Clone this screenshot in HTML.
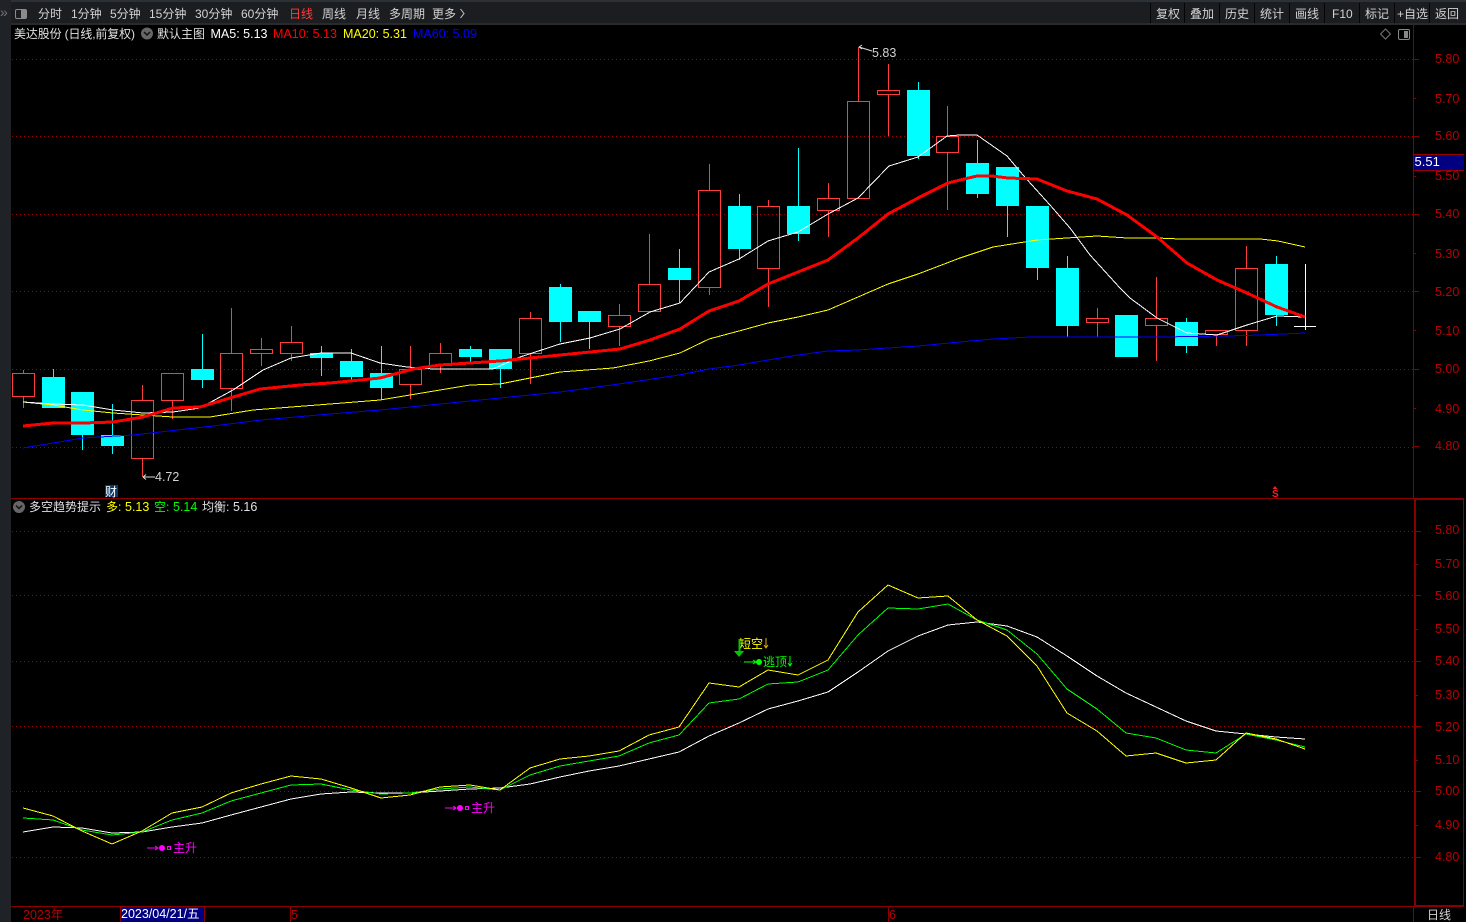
<!DOCTYPE html>
<html><head><meta charset="utf-8"><style>
html,body{margin:0;padding:0;background:#000;width:1466px;height:922px;overflow:hidden}
svg{display:block;position:absolute;left:0;top:0}
text{font-family:"Liberation Sans","Noto Sans CJK SC",sans-serif;font-size:12.5px}
.t{fill:#d2d2d2;font-size:12px}
.a{fill:#bb0000;font-size:12.5px}
</style></head><body>
<svg width="1466" height="922" viewBox="0 0 1466 922" xmlns="http://www.w3.org/2000/svg">
<rect width="1466" height="922" fill="#000"/>
<!-- left strip / toolbar -->
<rect x="0" y="0" width="11" height="922" fill="#1f2327"/>
<rect x="0" y="0" width="1466" height="24" fill="#1b1d21"/>
<rect x="0" y="0" width="1466" height="2" fill="#2c3137"/>
<rect x="11" y="23" width="1455" height="2" fill="#2a2a2a"/>
<rect x="0" y="0" width="11" height="25" fill="#1f2327"/>
<text x="0" y="17" style="font-size:14px;fill:#70757a">»</text>
<rect x="15.5" y="9.5" width="11" height="9" rx="1.5" fill="none" stroke="#8a8a8a"/>
<rect x="21" y="10" width="5" height="8" fill="#8a8a8a"/>
<g class="tb">
<text class="t" x="38" y="18">分时</text>
<text class="t" x="71" y="18">1分钟</text>
<text class="t" x="110" y="18">5分钟</text>
<text class="t" x="149" y="18">15分钟</text>
<text class="t" x="195" y="18">30分钟</text>
<text class="t" x="241" y="18">60分钟</text>
<text class="t" x="289" y="18" style="fill:#ff3c3c">日线</text>
<text class="t" x="322" y="18">周线</text>
<text class="t" x="356" y="18">月线</text>
<text class="t" x="389" y="18">多周期</text>
<text class="t" x="432" y="18">更多</text>
<path d="M460.500 9l3.500 4.500l-3.500 4.500" fill="none" stroke="#c8c8c8"/>
</g>
<!-- right toolbar buttons -->
<path d="M1150.500 3V23M1184.500 3V23M1219.500 3V23M1254.500 3V23M1289.500 3V23M1324.500 3V23M1359.500 3V23M1394.500 3V23M1429.500 3V23" stroke="#050505" shape-rendering="crispEdges"/>
<text class="t" x="1156" y="18">复权</text>
<text class="t" x="1190" y="18">叠加</text>
<text class="t" x="1225" y="18">历史</text>
<text class="t" x="1260" y="18">统计</text>
<text class="t" x="1295" y="18">画线</text>
<text class="t" x="1332" y="18">F10</text>
<text class="t" x="1365" y="18">标记</text>
<text class="t" x="1397" y="18">+自选</text>
<text class="t" x="1435" y="18">返回</text>
<!-- header legend -->
<text class="t" x="14" y="38" textLength="121" style="fill:#e0e0e0">美达股份 (日线,前复权)</text>
<circle cx="147" cy="33.500" r="6" fill="#666"/>
<path d="M144 32l3 3l3-3" fill="none" stroke="#111" stroke-width="1.500"/>
<text class="t" x="157" y="38" style="fill:#e0e0e0">默认主图</text>
<text x="210.500" y="38" style="fill:#ffffff">MA5: 5.13</text>
<text x="273" y="38" style="fill:#ff0000">MA10: 5.13</text>
<text x="343" y="38" style="fill:#ffff00">MA20: 5.31</text>
<text x="413" y="38" style="fill:#0000ff">MA60: 5.09</text>
<path d="M1385.500 29l5 5l-5 5l-5-5z" fill="none" stroke="#777"/>
<rect x="1398.500" y="29.500" width="11" height="10" rx="1.500" fill="none" stroke="#888"/>
<rect x="1404" y="31" width="4" height="7" fill="#888"/>
<!-- grid -->
<g stroke="#a00000" stroke-dasharray="1 3" shape-rendering="crispEdges">
<path d="M12 59.500H1413M12 136.500H1413M12 214.500H1413M12 291.500H1413M12 369.500H1413M12 447.500H1413"/>
<path d="M12 531.500H1413M12 595.500H1413M12 661.500H1413M12 726.500H1413M12 791.500H1413M12 857.500H1413"/>
</g>
<!-- frame -->
<g fill="#8a0000" shape-rendering="crispEdges">
<rect x="11" y="498" width="1403" height="1"/>
<rect x="1413" y="25" width="1" height="473"/>
<rect x="1414" y="498" width="50" height="2"/>
<rect x="1414" y="498" width="2" height="408"/>
<rect x="1463" y="498" width="1" height="408"/>
<rect x="1414" y="905" width="50" height="2"/>
<rect x="11" y="906" width="1403" height="1"/>
<rect x="1413" y="906" width="1" height="16"/>
<rect x="120" y="907" width="1" height="15"/>
<rect x="204" y="907" width="1" height="15"/>
<rect x="290" y="907" width="1" height="15"/>
<rect x="888" y="907" width="1" height="15"/>
</g>
<!-- axis ticks -->
<path d="M1414 59.500h5M1414 98.500h2M1414 136.500h5M1414 176.500h2M1414 214.500h5M1414 253.500h2M1414 291.500h5M1414 330.500h2M1414 369.500h5M1414 408.500h2M1414 446.500h5M1416 531.500h5M1416 564.500h2M1416 595.500h5M1416 629.500h2M1416 661.500h5M1416 695.500h2M1416 726.500h5M1416 760.500h2M1416 791.500h5M1416 825.500h2M1416 857.500h5" stroke="#8a0000" shape-rendering="crispEdges"/>
<!-- axis labels -->
<text class="a" x="1435" y="63">5.80</text><text class="a" x="1435" y="103">5.70</text><text class="a" x="1435" y="140">5.60</text><text class="a" x="1435" y="180">5.50</text><text class="a" x="1435" y="218">5.40</text><text class="a" x="1435" y="258">5.30</text><text class="a" x="1435" y="296">5.20</text><text class="a" x="1435" y="335">5.10</text><text class="a" x="1435" y="373">5.00</text><text class="a" x="1435" y="413">4.90</text><text class="a" x="1435" y="450">4.80</text>
<text class="a" x="1435" y="534">5.80</text><text class="a" x="1435" y="568">5.70</text><text class="a" x="1435" y="600">5.60</text><text class="a" x="1435" y="633">5.50</text><text class="a" x="1435" y="665">5.40</text><text class="a" x="1435" y="699">5.30</text><text class="a" x="1435" y="731">5.20</text><text class="a" x="1435" y="764">5.10</text><text class="a" x="1435" y="795">5.00</text><text class="a" x="1435" y="829">4.90</text><text class="a" x="1435" y="861">4.80</text>
<!-- current price -->
<rect x="1414" y="154" width="50" height="16" fill="#000080"/>
<path d="M1414 154.500h50M1414 170.500h50" stroke="#9a0000" shape-rendering="crispEdges"/>
<text x="1414.500" y="166" style="fill:#fff;font-size:13px">5.51</text>
<!-- cyan candles -->
<g shape-rendering="crispEdges">
<path stroke="#00ffff" fill="none" d="M53.500 369V377M82.500 435V450M112.500 404V435M112.500 446V454M202.500 334V369M202.500 380V388M321.500 346V353M321.500 358V376M351.500 349V361M351.500 377V381M381.500 346V373M381.500 388V400M470.500 346V349M470.500 357V362M500.500 369V388M560.500 284V287M560.500 322V342M589.500 322V349M679.500 249V268M679.500 280V303M739.500 194V206M739.500 249V260M798.500 148V206M798.500 234V241M918.500 82V90M918.500 156V159M977.500 140V163M977.500 194V198M1007.500 206V237M1037.500 268V280M1067.500 256V268M1067.500 326V337M1186.500 318V322M1186.500 346V353M1276.500 256V264M1276.500 315V326"/>
<g fill="#00ffff">
<rect x="42" y="377" width="23" height="31"/><rect x="71" y="392" width="23" height="43"/><rect x="101" y="435" width="23" height="11"/><rect x="191" y="369" width="23" height="11"/><rect x="310" y="353" width="23" height="5"/><rect x="340" y="361" width="23" height="16"/><rect x="370" y="373" width="23" height="15"/><rect x="459" y="349" width="23" height="8"/><rect x="489" y="349" width="23" height="20"/><rect x="549" y="287" width="23" height="35"/><rect x="578" y="311" width="23" height="11"/><rect x="668" y="268" width="23" height="12"/><rect x="728" y="206" width="23" height="43"/><rect x="787" y="206" width="23" height="28"/><rect x="907" y="90" width="23" height="66"/><rect x="966" y="163" width="23" height="31"/><rect x="996" y="167" width="23" height="39"/><rect x="1026" y="206" width="23" height="62"/><rect x="1056" y="268" width="23" height="58"/><rect x="1115" y="315" width="23" height="42"/><rect x="1175" y="322" width="23" height="24"/><rect x="1265" y="264" width="23" height="51"/>
</g>
<!-- red candles -->
<path stroke="#ff3c3c" fill="none" d="M23.500 370V373M23.500 397V408M12.500 373.500h22v23h-22zM142.500 385V400M142.500 459V477M131.500 400.500h22v58h-22zM172.500 401V419M161.500 373.500h22v27h-22zM231.500 308V353M231.500 388V411M220.500 353.500h22v35h-22zM261.500 338V349M261.500 354V366M250.500 349.500h22v4h-22zM291.500 326V342M291.500 354V361M280.500 342.500h22v11h-22zM410.500 346V369M410.500 385V399M399.500 369.500h22v15h-22zM440.500 343V353M440.500 365V373M429.500 353.500h22v12h-22zM530.500 312V318M530.500 353V384M519.500 318.500h22v35h-22zM619.500 304V315M619.500 326V346M608.500 315.500h22v11h-22zM649.500 234V284M649.500 311V312M638.500 284.500h22v27h-22zM709.500 164V190M709.500 288V295M698.500 190.500h22v97h-22zM768.500 200V206M768.500 268V307M757.500 206.500h22v62h-22zM828.500 183V198M828.500 211V237M817.500 198.500h22v12h-22zM858.500 47V101M847.500 101.500h22v97h-22zM888.500 64V90M888.500 95V136M877.500 90.500h22v4h-22zM947.500 106V136M947.500 153V210M936.500 136.500h22v16h-22zM1097.500 308V318M1097.500 323V337M1086.500 318.500h22v4h-22zM1156.500 277V318M1156.500 326V361M1145.500 318.500h22v7h-22zM1216.500 335V346M1205.500 330.500h22v4h-22zM1246.500 246V268M1246.500 331V346M1235.500 268.500h22v62h-22z"/>
<path stroke="#fff" fill="none" d="M1305.500 264V330M1294 326.500H1316"/>
</g>
<!-- MA lines -->
<g fill="none" shape-rendering="crispEdges" stroke-linejoin="round">
<polyline stroke="#0000ff" stroke-width="1" points="23,448 83,438 133,435 213,426 261,420 330,414 380,410 440,404 500,398 560,392 619,384 679,375 709,369 739,365 768,360 798,355 828,351 858,350 888,348 918,346 960,342 993,339 1030,337 1083,337 1113,337 1160,337 1227,336 1260,335 1305,333"/>
<polyline stroke="#ffff00" stroke-width="1" points="23,402 53,405 83,410 113,413 143,415 173,417 210,417 253,410 330,404 380,400 440,390 470,385 500,384 530,378 560,372 613,368 649,361 680,353 709,339 739,331 768,323 798,317 828,310 858,297 888,284 918,274 960,258 993,247 1037,240 1067,238 1097,236 1127,238 1157,238 1180,239 1260,239 1278,241 1305,247"/>
<polyline stroke="#ffffff" stroke-width="1" points="23,402 53,404 83,405 113,410 143,413 173,412 200,408 233,390 263,370 291,358 321,353 351,353 380,363 407,367 433,369 493,369 520,357 560,344 590,338 620,329 650,312 680,303 709,272 739,259 768,241 798,232 828,214 858,198 889,166 918,157 947,136 960,135 977,135 1007,156 1023,175 1050,205 1070,228 1090,255 1120,288 1130,298 1157,318 1187,333 1217,335 1247,325 1277,316 1305,317"/>
<polyline stroke="#ff0000" stroke-width="3" points="23,426 53,423 83,423 113,422 143,417 173,408 200,407 230,398 260,389 300,385 330,383 380,378 413,369 440,365 500,361 560,355 620,349 650,340 680,329 709,311 739,301 768,284 798,272 828,260 858,238 888,214 918,198 948,183 960,180 977,176 992,176 1008,178 1037,179 1067,191 1097,199 1127,215 1157,237 1187,263 1217,280 1247,293 1277,307 1305,317"/>
</g>
<!-- high/low markers -->
<path d="M859 47l13 4M859 47l3-2M859 47l3 2" stroke="#ddd" fill="none"/>
<text x="872" y="57" style="fill:#d2d2d2">5.83</text>
<path d="M143 477h12M143 477l3-2.500M143 477l3 2.500" stroke="#ddd" fill="none"/>
<text x="155" y="481" style="fill:#d2d2d2">4.72</text>
<rect x="105" y="485" width="13" height="12" fill="#0a3a6a"/>
<text class="t" x="105" y="496" style="fill:#fff">财</text>
<path d="M1275 486l2.500 3h-5z" fill="#ff1a1a"/>
<text x="1272" y="497" style="fill:#ff1a1a;font-size:10px;font-weight:bold">S</text>
<!-- lower panel legend -->
<circle cx="19" cy="507" r="6" fill="#666"/>
<path d="M16 505.500l3 3l3-3" fill="none" stroke="#111" stroke-width="1.500"/>
<text class="t" x="29" y="511" style="fill:#e0e0e0">多空趋势提示</text>
<text class="t" x="106" y="511" style="fill:#ffff00">多:</text><text x="125" y="511" style="fill:#ffff00">5.13</text>
<text class="t" x="154" y="511" style="fill:#00ff00">空:</text><text x="173" y="511" style="fill:#00ff00">5.14</text>
<text class="t" x="202" y="511" style="fill:#e0e0e0">均衡:</text><text x="233" y="511" style="fill:#e0e0e0">5.16</text>
<!-- lower lines -->
<g fill="none" shape-rendering="crispEdges" stroke-width="1">
<polyline stroke="#ffffff" points="23,832 53,827 82,828 112,833 142,832 172,827 202,823 231,815 261,807 291,799 321,794 351,792 381,793 410,793 440,791 470,789 500,788 530,784 560,777 589,771 619,766 649,759 679,752 709,736 739,723 768,709 798,701 828,692 858,672 888,651 918,636 948,625 977,622 1007,626 1037,637 1067,656 1097,676 1126,693 1156,707 1186,721 1216,731 1246,734 1276,737 1305,739"/>
<polyline stroke="#00ff00" points="23,818 53,820 82,830 112,835 142,832 172,820 202,813 231,801 261,793 291,785 321,784 351,790 381,794 410,793 440,789 470,787 500,790 530,775 560,766 589,761 619,756 649,743 679,735 709,703 739,699 768,684 798,682 828,670 858,635 888,608 918,609 948,604 977,620 1007,630 1037,654 1067,689 1097,709 1126,733 1156,738 1186,750 1216,753 1246,734 1276,740 1305,747"/>
<polyline stroke="#ffff00" points="23,808 53,816 82,831 112,844 142,831 172,813 202,807 231,793 261,784 291,776 321,779 351,788 381,798 410,795 440,787 470,785 500,790 530,768 560,759 589,756 619,751 649,735 679,727 709,683 739,687 768,670 798,675 828,660 858,612 888,585 918,598 948,596 977,620 1007,636 1037,666 1067,713 1097,731 1126,756 1156,753 1186,763 1216,760 1246,733 1276,739 1305,749"/>
</g>
<!-- signals -->
<path d="M147 848h11M155 846l3 2l-3 2M445 808h11M453 806l3 2l-3 2" stroke="#ff00ff" fill="none"/>
<circle cx="162" cy="848" r="3" fill="#ff00ff"/><circle cx="460" cy="808" r="3" fill="#ff00ff"/>
<rect x="167.500" y="846.500" width="3" height="3" fill="none" stroke="#ff00ff"/><rect x="465.500" y="806.500" width="3" height="3" fill="none" stroke="#ff00ff"/>
<text class="t" x="173" y="852" style="fill:#ff00ff">主升</text>
<text class="t" x="471" y="812" style="fill:#ff00ff">主升</text>
<text class="t" x="739" y="648" style="fill:#ffff00">短空</text>
<path d="M766 638v9M764 645l2 3l2-3" stroke="#e0b000" fill="none"/>
<path d="M739.500 639V651" stroke="#00c800" stroke-width="2" fill="none"/>
<path d="M734 651h10l-5 6z" fill="#00c800"/>
<path d="M744 662h11M753 660l3 2l-3 2" stroke="#00ff00" fill="none"/>
<circle cx="759" cy="662" r="3" fill="#00ff00"/>
<text class="t" x="763" y="666" style="fill:#00ff00">逃顶</text>
<path d="M790 656v9M788 663l2 3l2-3" stroke="#00ff00" fill="none"/>
<!-- bottom axis -->
<text class="a" x="23" y="919">2023年</text>
<rect x="121" y="907" width="83" height="15" fill="#000080"/>
<text x="121" y="918" style="fill:#fff">2023/04/21/五</text>
<text class="a" x="291" y="919">5</text>
<text class="a" x="889" y="919">6</text>
<text class="t" x="1427" y="919">日线</text>
</svg>
</body></html>
